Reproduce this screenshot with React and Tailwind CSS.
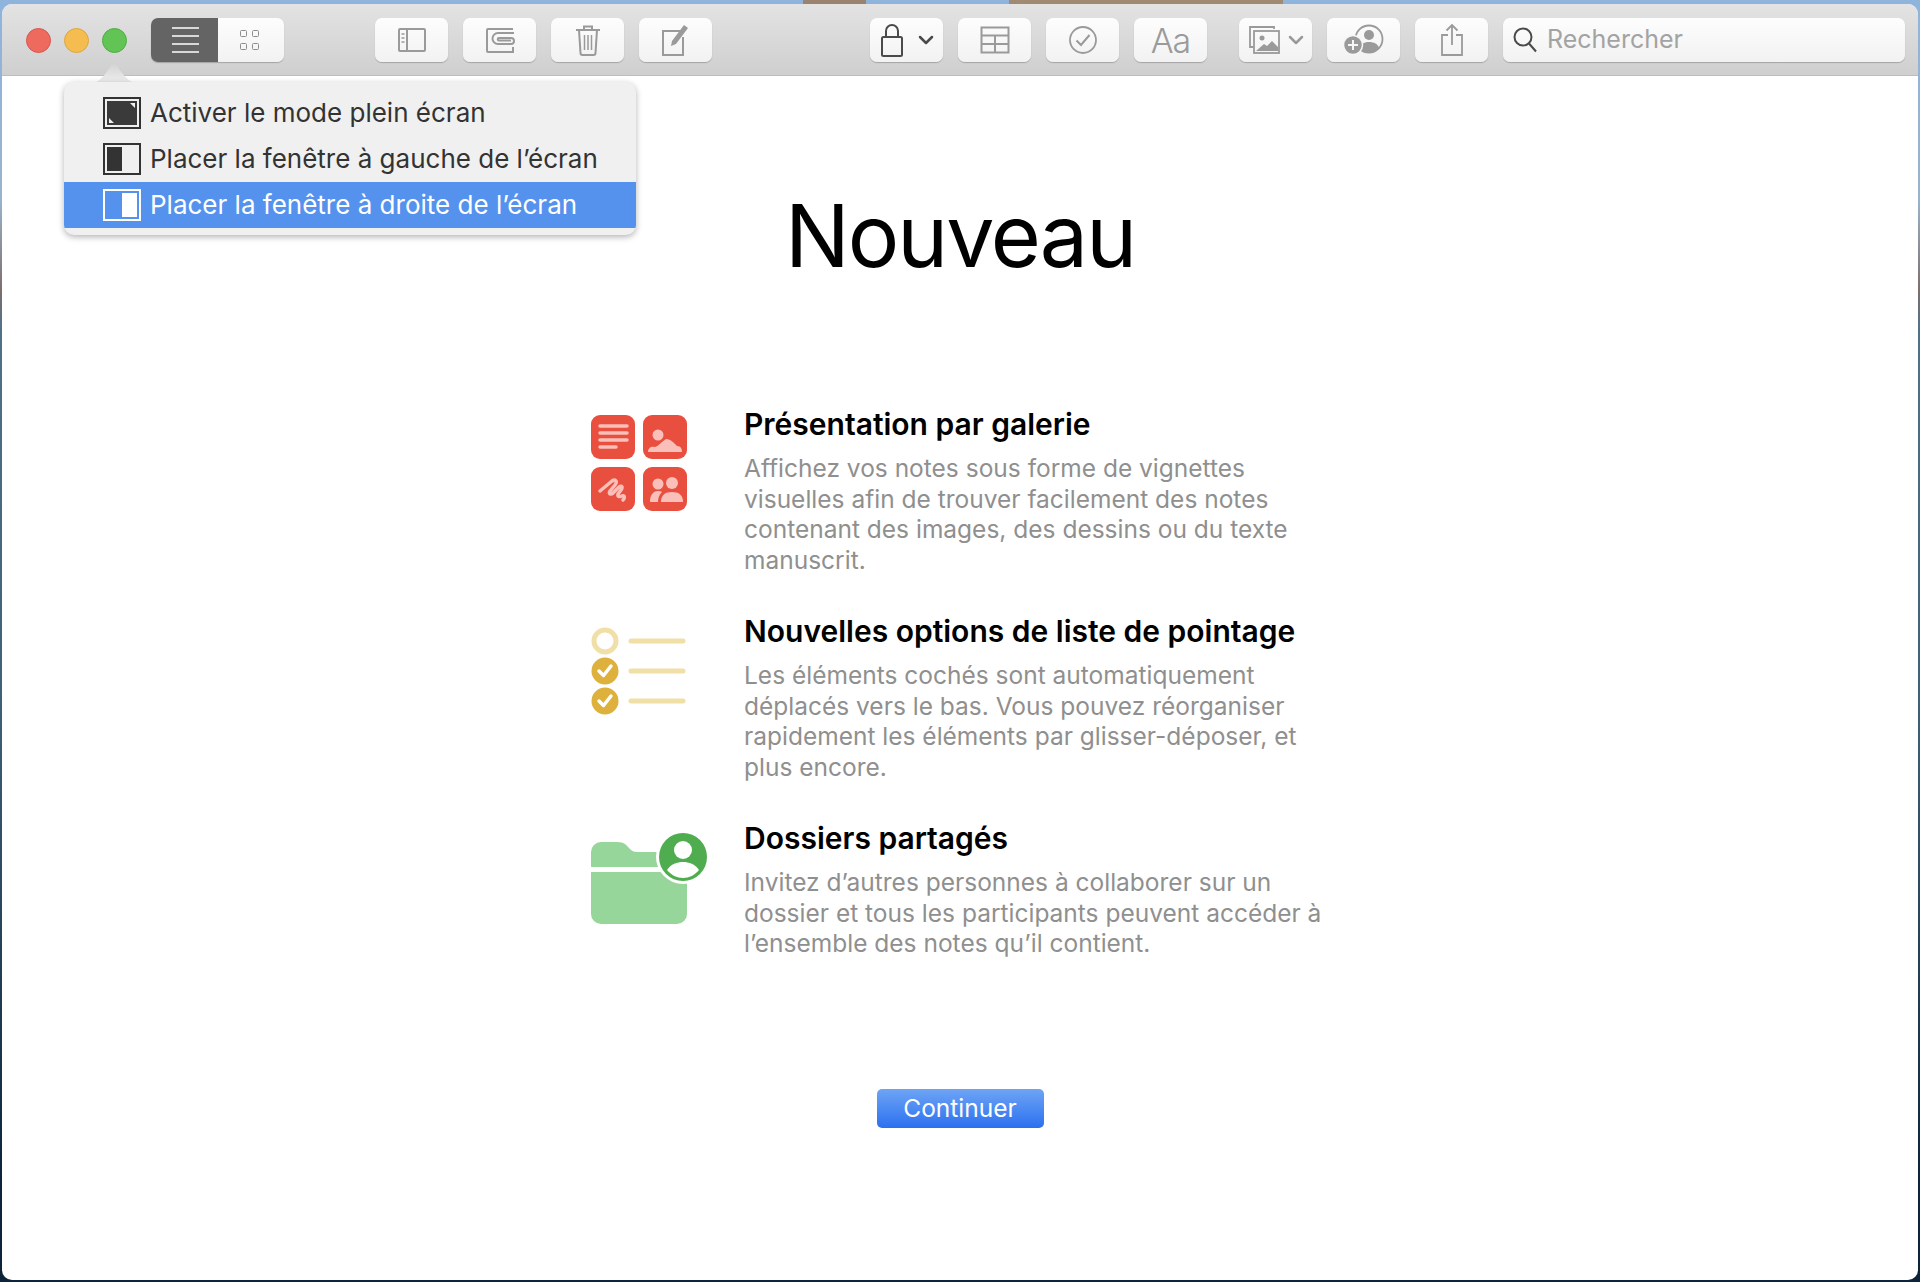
import React from "react"

const sans = "font-['Inter','Liberation_Sans',sans-serif]"

function ToolButton({ className = "", children }) {
  return (
    <div className={`w-[73px] h-[44px] shrink-0 rounded-[7px] bg-gradient-to-b from-[#fdfdfd] to-[#f2f2f2] shadow-[0_1px_1px_rgba(0,0,0,0.22)] flex items-center justify-center ${className}`}>
      {children}
    </div>
  )
}

function SidebarIcon() {
  return (
    <svg width="30" height="26" viewBox="0 0 30 26" fill="none" stroke="#9a9a9a" strokeWidth="2">
      <rect x="2" y="2" width="26" height="22" rx="1" />
      <path d="M10 2v22" />
      <path d="M4.500 7h3M4.500 11h3M4.500 15h3" strokeWidth="1.500" />
    </svg>
  )
}

function AttachIcon() {
  return (
    <svg width="32" height="28" viewBox="0 0 32 28" fill="none" stroke="#9a9a9a" strokeWidth="2">
      <path d="M29 3H4a1 1 0 0 0-1 1v21a1 1 0 0 0 1 1h25v-5" />
      <path d="M30 7H14a4.500 4.500 0 0 0 0 11h13a3 3 0 0 0 0-6H15a1.200 1.200 0 0 0 0 2.500h12" />
    </svg>
  )
}

function TrashIcon() {
  return (
    <svg width="26" height="32" viewBox="0 0 26 32" fill="none" stroke="#9a9a9a" strokeWidth="2">
      <path d="M1 6h24M9 6V2.500h8V6" />
      <path d="M4 6l1.500 23a2 2 0 0 0 2 2h11a2 2 0 0 0 2-2L22 6" />
      <path d="M9.500 11v15M13 11v15M16.500 11v15" strokeWidth="1.500" />
    </svg>
  )
}

function ComposeIcon() {
  return (
    <svg width="30" height="34" viewBox="0 0 30 34" fill="none">
      <path d="M20 8H2v24h20V14" stroke="#9a9a9a" strokeWidth="2" />
      <path d="M10 23l1-5L23 2l4 3-12 16z" fill="#9a9a9a" />
    </svg>
  )
}

function LockIcon() {
  return (
    <svg width="24" height="34" viewBox="0 0 24 34" fill="none" stroke="#4a4a4a" strokeWidth="2">
      <rect x="2" y="14" width="20" height="19" rx="1.500" />
      <path d="M6 14V8a6 6 0 0 1 12 0v6" />
    </svg>
  )
}

function Chevron({ color = "#4a4a4a" }) {
  return (
    <svg width="16" height="10" viewBox="0 0 16 10" fill="none" stroke={color} strokeWidth="2.500" strokeLinecap="round" strokeLinejoin="round">
      <path d="M2 2l6 6 6-6" />
    </svg>
  )
}

function TableIcon() {
  return (
    <svg width="30" height="28" viewBox="0 0 30 28" fill="none" stroke="#9a9a9a" strokeWidth="2">
      <rect x="1.500" y="1.500" width="27" height="25" />
      <path d="M1.500 9.500h27M1.500 18h27M15 9.500v17" />
    </svg>
  )
}

function CheckIcon() {
  return (
    <svg width="30" height="30" viewBox="0 0 30 30" fill="none" stroke="#9a9a9a" strokeWidth="1.800">
      <circle cx="15" cy="15" r="13" />
      <path d="M8.500 15.500l4.500 4.500 8.500-10" strokeWidth="2" />
    </svg>
  )
}

function MediaIcon() {
  return (
    <svg width="32" height="30" viewBox="0 0 32 30" fill="none" stroke="#9a9a9a" strokeWidth="1.800">
      <path d="M26 4V2H2v20h3" />
      <rect x="6" y="6" width="25" height="22" />
      <circle cx="14" cy="13" r="2.500" fill="#9a9a9a" stroke="none" />
      <path d="M8 26l8-7 3 2 5-5 6 6v4z" fill="#9a9a9a" stroke="none" />
    </svg>
  )
}

function CollabIcon() {
  return (
    <svg width="40" height="32" viewBox="0 0 40 32" fill="none">
      <circle cx="25" cy="15" r="13.500" stroke="#9a9a9a" strokeWidth="1.800" />
      <circle cx="25" cy="11" r="5" fill="#9a9a9a" />
      <path d="M15 25c1-5 5-7 10-7s9 2 10 6c-3 3-6 5-10 5s-7-1-10-4z" fill="#9a9a9a" />
      <circle cx="9" cy="21" r="9.500" fill="#9a9a9a" stroke="#f6f6f6" strokeWidth="1.500" />
      <path d="M9 16v10M4 21h10" stroke="#f6f6f6" strokeWidth="2" />
    </svg>
  )
}

function ShareIcon() {
  return (
    <svg width="24" height="34" viewBox="0 0 24 34" fill="none" stroke="#9a9a9a" strokeWidth="1.800">
      <path d="M8 12H2v20h20V12h-6" />
      <path d="M12 22V2M6.500 7.500L12 2l5.500 5.500" />
    </svg>
  )
}

function SearchIcon() {
  return (
    <svg width="26" height="28" viewBox="0 0 26 28" fill="none" stroke="#4a4a4a" strokeWidth="2">
      <circle cx="11" cy="11" r="8.500" />
      <path d="M17 17.500l7 8" />
    </svg>
  )
}

function Toolbar() {
  return (
    <div className="h-[72px] shrink-0 border-b border-[#bdbdbd] bg-gradient-to-b from-[#e3e3e3] to-[#cfcfcf] rounded-t-[10px] flex items-center pl-[24px] pr-[13px] pt-[1px]">
      <div className="w-[25px] h-[25px] rounded-full bg-[#ee6a5f] border border-[#d9564c]" />
      <div className="w-[25px] h-[25px] rounded-full bg-[#f5bd4f] border border-[#dfa63c] ml-[13px]" />
      <div className="w-[25px] h-[25px] rounded-full bg-[#61c454] border border-[#4eae42] ml-[13px]" />

      <div className="ml-[24px] flex h-[44px] w-[133px] rounded-[7px] overflow-hidden shadow-[0_1px_1px_rgba(0,0,0,0.22)]">
        <div className="w-[67px] pl-[2px] bg-[#646464] flex flex-col items-center justify-center gap-[6px]">
          <div className="w-[27px] h-[2px] bg-[#d8d8d8]" />
          <div className="w-[27px] h-[2px] bg-[#d8d8d8]" />
          <div className="w-[27px] h-[2px] bg-[#d8d8d8]" />
          <div className="w-[27px] h-[2px] bg-[#d8d8d8]" />
        </div>
        <div className="flex-1 pr-[3px] bg-gradient-to-b from-[#fdfdfd] to-[#f2f2f2] flex items-center justify-center">
          <div className="grid grid-cols-2 gap-x-[5px] gap-y-[6px]">
            <div className="w-[7px] h-[7px] rounded-[1.500px] border border-[#8c8c8c]" />
            <div className="w-[7px] h-[7px] rounded-[1.500px] border border-[#8c8c8c]" />
            <div className="w-[7px] h-[7px] rounded-[1.500px] border border-[#8c8c8c]" />
            <div className="w-[7px] h-[7px] rounded-[1.500px] border border-[#8c8c8c]" />
          </div>
        </div>
      </div>

      <div className="ml-[91px] flex gap-[15px]">
        <ToolButton><SidebarIcon /></ToolButton>
        <ToolButton><AttachIcon /></ToolButton>
        <ToolButton><TrashIcon /></ToolButton>
        <ToolButton><ComposeIcon /></ToolButton>
      </div>

      <div className="ml-[158px] flex gap-[15px]">
        <ToolButton className="gap-[14px]"><LockIcon /><Chevron /></ToolButton>
        <ToolButton><TableIcon /></ToolButton>
        <ToolButton><CheckIcon /></ToolButton>
        <ToolButton>
          <span className={`${sans} text-[34px] font-light text-[#9a9a9a] tracking-[-1px]`}>Aa</span>
        </ToolButton>
      </div>

      <ToolButton className="ml-[32px] gap-[8px]"><MediaIcon /><Chevron color="#9a9a9a" /></ToolButton>
      <ToolButton className="ml-[15px]"><CollabIcon /></ToolButton>
      <ToolButton className="ml-[15px]"><ShareIcon /></ToolButton>

      <div className="ml-[15px] h-[44px] flex-1 rounded-[7px] bg-gradient-to-b from-[#fdfdfd] to-[#f2f2f2] shadow-[0_1px_1px_rgba(0,0,0,0.22)] flex items-center pl-[9px]">
        <SearchIcon />
        <span className={`${sans} ml-[9px] text-[25px] text-[#a3a3a3]`}>Rechercher</span>
      </div>
    </div>
  )
}

function FullscreenGlyph() {
  return (
    <svg width="38" height="32" viewBox="0 0 38 32" fill="none">
      <rect x="1" y="1" width="36" height="30" stroke="#333" strokeWidth="2" fill="none" />
      <rect x="4" y="4" width="30" height="24" fill="#3a3a3a" />
      <path d="M32 6v5l-5-5zM6 26v-5l5 5z" fill="#f0f0f0" />
    </svg>
  )
}

function SplitGlyph({ color, side }) {
  return (
    <svg width="38" height="32" viewBox="0 0 38 32" fill="none">
      <rect x="1" y="1" width="36" height="30" stroke={color} strokeWidth="2" fill="none" />
      <rect x={side === "left" ? 4 : 19} y="4" width="15" height="24" fill={color} />
    </svg>
  )
}

function MenuRow({ glyph, label, active }) {
  return (
    <div className={`h-[46px] flex items-center pl-[39px] ${active ? "bg-[#5592ee] text-white" : "text-[#333]"}`}>
      {glyph}
      <span className="ml-[9px] text-[26px] leading-none whitespace-nowrap">{label}</span>
    </div>
  )
}

function WindowMenu() {
  return (
    <div className="absolute left-[64px] top-[82px] z-10">
      <svg className="absolute left-[21px] top-[-21px]" width="60" height="23" viewBox="0 0 60 23">
        <defs>
          <linearGradient id="arrow" x1="0" y1="0" x2="0" y2="1">
            <stop offset="0" stopColor="#d2d2d2" />
            <stop offset="1" stopColor="#f0f0f0" />
          </linearGradient>
        </defs>
        <path d="M2 23C14 22 17 18 28 2c0 0 1-1 2 0 11 16 14 20 28 21z" fill="url(#arrow)" />
      </svg>
      <div className={`${sans} relative w-[572px] h-[153px] pt-[8px] rounded-[10px] bg-[#f0f0f0] shadow-[0_2px_6px_rgba(0,0,0,0.3)] overflow-hidden`}>
        <MenuRow glyph={<FullscreenGlyph />} label="Activer le mode plein écran" />
        <MenuRow glyph={<SplitGlyph color="#333" side="left" />} label="Placer la fenêtre à gauche de l’écran" />
        <MenuRow glyph={<SplitGlyph color="#fff" side="right" />} label="Placer la fenêtre à droite de l’écran" active />
      </div>
    </div>
  )
}

function GalleryIcon() {
  return (
    <svg width="98" height="98" viewBox="0 0 98 98">
      <rect x="0" y="0" width="44" height="44" rx="9" fill="#e94f3f" />
      <rect x="52" y="0" width="44" height="44" rx="9" fill="#e94f3f" />
      <rect x="0" y="52" width="44" height="44" rx="9" fill="#e94f3f" />
      <rect x="52" y="52" width="44" height="44" rx="9" fill="#e94f3f" />
      <path d="M9 11h27M9 18h27M9 25h27M9 32h16" stroke="#f9bfb8" strokeWidth="3.500" strokeLinecap="round" />
      <circle cx="67" cy="20" r="5.500" fill="#f9bfb8" />
      <path d="M57 37c0-4 3-6 7-5 4-1 6-5 11-8 5 0 8 4 11 7 4 0 5 3 5 6z" fill="#f9bfb8" />
      <path d="M9 76l12-10c3-2 6 0 3 4l-5 6c-2 3 1 4 3 2l6-6c3-2 4 0 2 3l-3 4c-1 3 2 3 4 2 3-1 3 2 1 4" fill="none" stroke="#f9bfb8" strokeWidth="3.500" strokeLinecap="round" strokeLinejoin="round" />
      <circle cx="67" cy="69" r="5.500" fill="#f9bfb8" />
      <circle cx="81" cy="68" r="6" fill="#f9bfb8" />
      <path d="M59 87c0-7 3-11 8-11 2 0 3 0 4 1-3 3-4 6-4 10z" fill="#f9bfb8" />
      <path d="M70 87c0-7 4-10 11-10s11 3 11 10z" fill="#f9bfb8" />
    </svg>
  )
}

function ChecklistIcon() {
  return (
    <svg width="98" height="90" viewBox="0 0 98 90">
      <circle cx="14" cy="14" r="11" fill="none" stroke="#f1dfa8" strokeWidth="5" />
      <circle cx="14" cy="44" r="13.500" fill="#deb03c" />
      <circle cx="14" cy="74" r="13.500" fill="#deb03c" />
      <path d="M8 44l4.500 4.500L20 39M8 74l4.500 4.500L20 69" fill="none" stroke="#fff" strokeWidth="3.500" strokeLinecap="round" strokeLinejoin="round" />
      <path d="M40 14h52M40 44h52M40 74h52" stroke="#f1dfa8" strokeWidth="5" strokeLinecap="round" />
    </svg>
  )
}

function FolderIcon() {
  return (
    <svg width="122" height="92" viewBox="0 0 122 92">
      <path d="M0 35V20a10 10 0 0 1 10-10h16c8 0 9 3 13 7 3 3 5 3 10 3h30v15z" fill="#97d69a" />
      <path d="M0 40h96v42a10 10 0 0 1-10 10H10A10 10 0 0 1 0 82z" fill="#97d69a" />
      <circle cx="92" cy="25" r="27" fill="#fff" />
      <circle cx="92" cy="25" r="24" fill="#4fad50" />
      <circle cx="92" cy="18" r="9" fill="#fff" />
      <path d="M76 38c4-6 10-8 16-8s12 2 16 8c-4 5-10 8-16 8s-12-3-16-8z" fill="#fff" />
    </svg>
  )
}

function Feature({ icon, title, iconClass, children }) {
  return (
    <div className="flex h-[207px]">
      <div className={`w-[155px] shrink-0 pl-[2px] ${iconClass}`}>{icon}</div>
      <div>
        <h2 className="text-[30px] leading-[36px] font-semibold text-black whitespace-nowrap">{title}</h2>
        <p className="mt-[11px] text-[24.500px] leading-[30.600px] text-[#8f8f8f] whitespace-nowrap">{children}</p>
      </div>
    </div>
  )
}

export default function App() {
  return (
    <div className={`${sans} relative h-[1282px] w-full overflow-hidden bg-[linear-gradient(to_bottom,#8fb4dc_0px,#9ab3cc_200px,#7d6f6c_290px,#4f7287_330px,#3f6178_700px,#0d2438_1180px)] flex flex-col px-[2px]`}>
      {/* bit of desktop wallpaper above the window */}
      <div className="h-[4px] shrink-0 flex">
        <div className="w-[801px]" />
        <div className="w-[63px] bg-[#9a8470]" />
        <div className="w-[143px]" />
        <div className="w-[274px] bg-[#a08a74]" />
      </div>

      <div className="flex-1 flex flex-col bg-white rounded-t-[10px] rounded-b-[10px] mb-[2px]">
        <Toolbar />
        <div className="flex-1 flex flex-col items-center">
          <h1 className="mt-[105px] text-[86px] leading-[110px] font-normal text-black tracking-[-2px]">Nouveau</h1>

          <div className="w-[742px] mt-[115px]">
            <Feature icon={<GalleryIcon />} iconClass="pt-[9px]" title="Présentation par galerie">
              Affichez vos notes sous forme de vignettes<br />
              visuelles afin de trouver facilement des notes<br />
              contenant des images, des dessins ou du texte<br />
              manuscrit.
            </Feature>
            <Feature icon={<ChecklistIcon />} iconClass="pt-[14px]" title="Nouvelles options de liste de pointage">
              Les éléments cochés sont automatiquement<br />
              déplacés vers le bas. Vous pouvez réorganiser<br />
              rapidement les éléments par glisser-déposer, et<br />
              plus encore.
            </Feature>
            <Feature icon={<FolderIcon />} iconClass="pt-[12px]" title="Dossiers partagés">
              Invitez d’autres personnes à collaborer sur un<br />
              dossier et tous les participants peuvent accéder à<br />
              l’ensemble des notes qu’il contient.
            </Feature>
          </div>

          <button className="mt-[62px] w-[167px] h-[39px] rounded-[5px] bg-gradient-to-b from-[#6ea4f5] to-[#2a70ef] text-white text-[24.500px] leading-none">
            Continuer
          </button>
        </div>
      </div>

      <WindowMenu />
    </div>
  )
}
